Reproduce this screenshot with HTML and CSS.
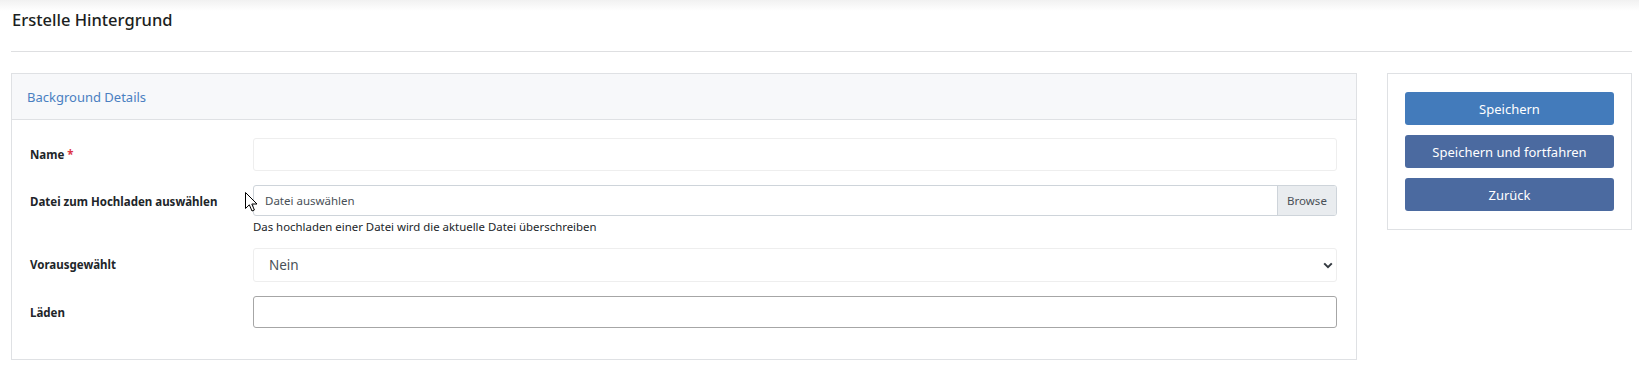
FILE: index.html
```html
<!DOCTYPE html>
<html lang="de">
<head>
  <meta charset="UTF-8" />
  <meta name="viewport" content="width=device-width, initial-scale=1.0"/>
  <title>Erstelle Hintergrund</title>
  <link rel="stylesheet" href="styles.css">
</head>
<body>
  <div class="page">
    <h1 class="page-title">Erstelle Hintergrund</h1>
    <hr class="divider">

    <div class="content">
      <section class="card">
        <div class="card-header">Background Details</div>
        <div class="card-body">
          <div class="form-row">
            <label class="form-label">Name <span class="req">*</span></label>
            <div class="form-field">
              <input type="text" class="input input-light">
            </div>
          </div>

          <div class="form-row">
            <label class="form-label">Datei zum Hochladen auswählen</label>
            <div class="form-field">
              <div class="file-input">
                <span class="file-text">Datei auswählen</span>
                <span class="file-btn">Browse</span>
              </div>
              <div class="help">Das hochladen einer Datei wird die aktuelle Datei überschreiben</div>
            </div>
          </div>

          <div class="form-row">
            <label class="form-label">Vorausgewählt</label>
            <div class="form-field">
              <div class="select">
                <span>Nein</span>
                <svg width="10" height="7" viewBox="0 0 10 7"><path d="M1.2 1.4 5 5.2 8.8 1.4" fill="none" stroke="#343a40" stroke-width="2"/></svg>
              </div>
            </div>
          </div>

          <div class="form-row last">
            <label class="form-label">Läden</label>
            <div class="form-field">
              <input type="text" class="input input-dark">
            </div>
          </div>
        </div>
      </section>

      <aside class="actions">
        <button class="btn btn-primary">Speichern</button>
        <button class="btn btn-dark">Speichern und fortfahren</button>
        <button class="btn btn-dark">Zurück</button>
      </aside>
    </div>
  </div>

  <!-- Mauszeiger aus dem Screenshot -->
  <svg class="cursor" width="13" height="20" viewBox="0 0 13 20">
    <path d="M0.5 0.5 L0.5 16.5 L4.3 12.8 L7 19 L9.4 18 L6.8 12 L12 12 Z" fill="#fff" stroke="#000" stroke-width="1" stroke-linejoin="round"/>
  </svg>
</body>
</html>
```

FILE: styles.css
```css
body {
  margin: 0;
  padding: 0;
  background: #ffffff;
  color: #212529;
  font-family: 'Noto Sans', 'Open Sans', Arial, sans-serif;
}

.page {
  padding: 0 7px 0 11px;
  background: linear-gradient(to bottom, #f1f1f1 0, #ffffff 11px);
}

.page-title {
  margin: 0;
  padding: 8px 0 0 1px;
  font-size: 16.5px;
  line-height: 24px;
  font-weight: 500;
  color: #1b1e21;
}

.divider {
  border: none;
  border-top: 1px solid #dedfe1;
  margin: 19px 0 21px 0;
}

.content {
  display: grid;
  grid-template-columns: 1fr 245px;
  gap: 30px;
  align-items: start;
}

/* Karte */
.card {
  border: 1px solid #dfe1e4;
  background: #fff;
}

.card-header {
  background: #f7f8fa;
  border-bottom: 1px solid #dfe1e4;
  height: 45px;
  line-height: 46px;
  padding-left: 15px;
  font-size: 13px;
  color: #4a7fc1;
}

.card-body {
  padding: 18px 19px 31px 18px;
}

.form-row {
  display: grid;
  grid-template-columns: 223px 1fr;
  margin-bottom: 14px;
}

.form-row.last {
  margin-bottom: 0;
}

.form-label {
  font-size: 11.5px;
  font-weight: bold;
  color: #212529;
  padding-top: 9px;
}

.req {
  color: #dc3545;
}

.input {
  display: block;
  width: 100%;
  box-sizing: border-box;
  border-radius: 3px;
  background: #fff;
  margin: 0;
  font: inherit;
}

.input-light {
  border: 1px solid #eeeeee;
  height: 33px;
}

.input-dark {
  border: 1px solid #a6a6a6;
  height: 32px;
}

.file-input {
  display: flex;
  height: 31px;
  box-sizing: border-box;
  border: 1px solid #ced4da;
  border-radius: 3px;
  overflow: hidden;
  font-size: 11.5px;
}

.file-text {
  flex: 1;
  padding-left: 11px;
  line-height: 29px;
  color: #495057;
}

.file-btn {
  background: #e9ecef;
  border-left: 1px solid #ced4da;
  width: 58px;
  text-align: center;
  line-height: 29px;
  color: #495057;
}

.help {
  font-size: 11.4px;
  margin-top: 3px;
  color: #212529;
}

.select {
  display: flex;
  justify-content: space-between;
  align-items: center;
  height: 34px;
  box-sizing: border-box;
  border: 1px solid #eeeeee;
  border-radius: 3px;
  padding: 0 3px 0 15px;
  font-size: 13.5px;
  color: #495057;
}

/* Aktionen rechts */
.actions {
  border: 1px solid #dfe1e4;
  padding: 18px 17px 18px 17px;
  display: flex;
  flex-direction: column;
  gap: 10px;
}

.btn {
  height: 33px;
  border: none;
  border-radius: 3px;
  color: #ffffff;
  font-family: inherit;
  font-size: 13px;
  cursor: pointer;
}

.btn-primary {
  background-color: #437bbb;
}

.btn-dark {
  background-color: #4b6aa0;
}

.cursor {
  position: absolute;
  left: 245px;
  top: 192px;
}
```
